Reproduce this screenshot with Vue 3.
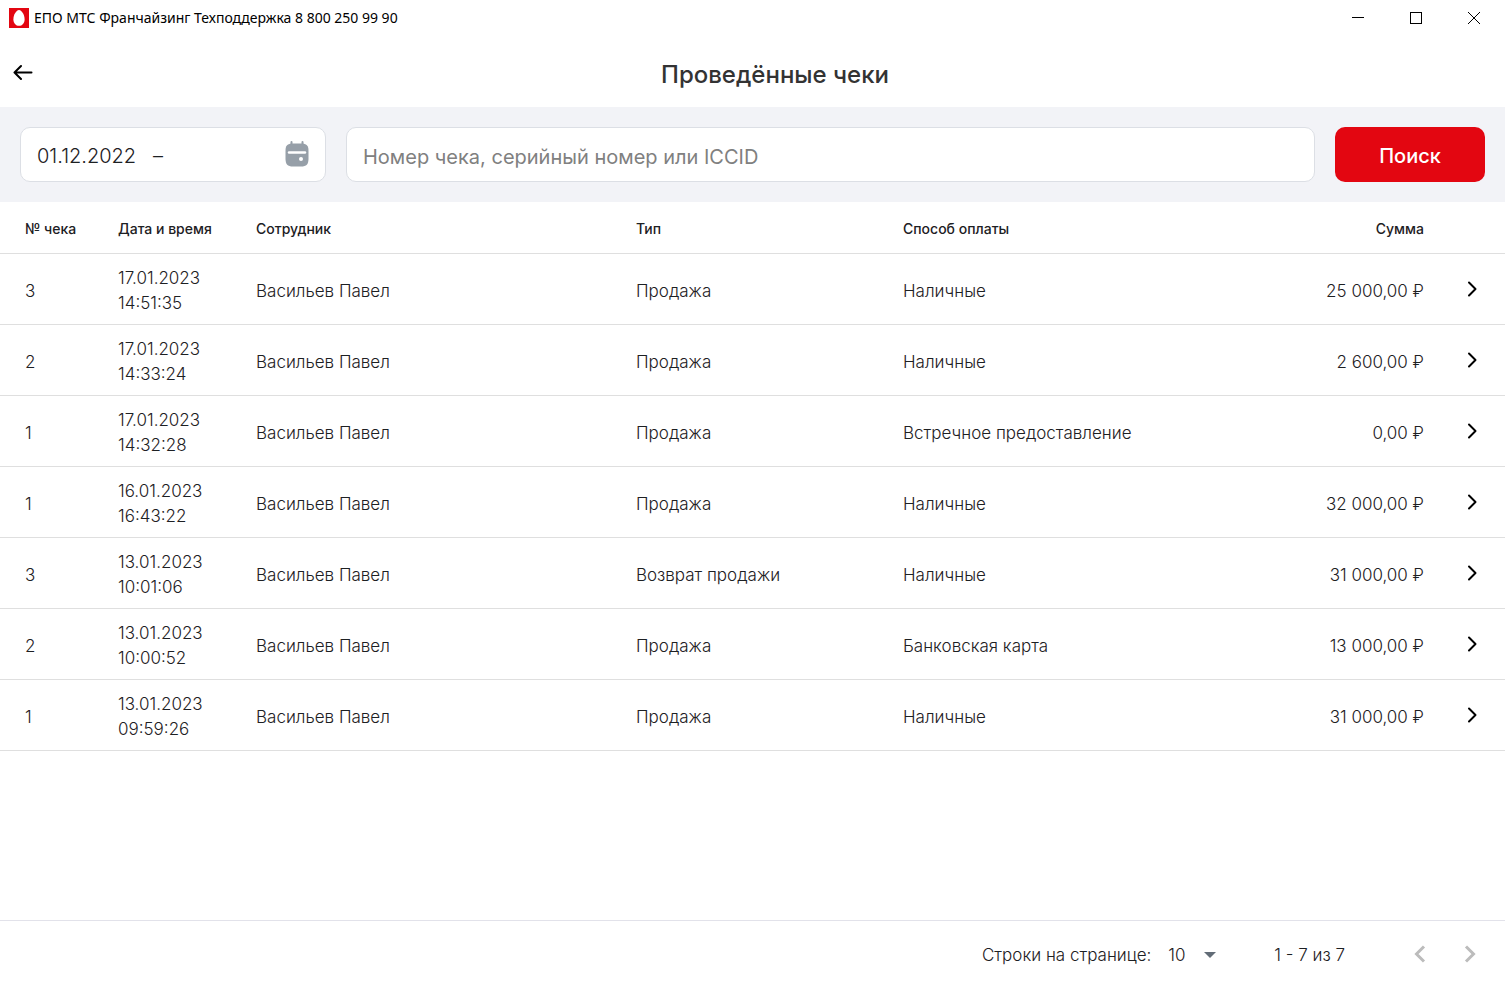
<script setup>
import { ref } from 'vue'

const period = ref('01.12.2022\u00a0\u00a0\u00a0–')
const query = ref('')
const pageSize = ref(10)

const receipts = [
  { number: 3, date: '17.01.2023', time: '14:51:35', employee: 'Васильев Павел', type: 'Продажа', payment: 'Наличные', total: '25 000,00 ₽' },
  { number: 2, date: '17.01.2023', time: '14:33:24', employee: 'Васильев Павел', type: 'Продажа', payment: 'Наличные', total: '2 600,00 ₽' },
  { number: 1, date: '17.01.2023', time: '14:32:28', employee: 'Васильев Павел', type: 'Продажа', payment: 'Встречное предоставление', total: '0,00 ₽' },
  { number: 1, date: '16.01.2023', time: '16:43:22', employee: 'Васильев Павел', type: 'Продажа', payment: 'Наличные', total: '32 000,00 ₽' },
  { number: 3, date: '13.01.2023', time: '10:01:06', employee: 'Васильев Павел', type: 'Возврат продажи', payment: 'Наличные', total: '31 000,00 ₽' },
  { number: 2, date: '13.01.2023', time: '10:00:52', employee: 'Васильев Павел', type: 'Продажа', payment: 'Банковская карта', total: '13 000,00 ₽' },
  { number: 1, date: '13.01.2023', time: '09:59:26', employee: 'Васильев Павел', type: 'Продажа', payment: 'Наличные', total: '31 000,00 ₽' },
]
</script>

<template>
  <div class="window">
    <div class="titlebar">
      <svg class="logo" width="20" height="20" viewBox="0 0 20 20" aria-hidden="true">
        <rect width="20" height="20" fill="#e30611" />
        <path d="M10 2C13 2 15.600 7.300 15.600 11.200C15.600 15.200 13.200 17.800 10 17.800C6.800 17.800 4.400 15.200 4.400 11.200C4.400 7.300 7 2 10 2Z" fill="#fff" />
      </svg>
      <span class="app-name">ЕПО МТС Франчайзинг Техподдержка 8 800 250 99 90</span>
      <div class="window-controls">
        <button type="button" aria-label="Свернуть">
          <svg width="12" height="12" viewBox="0 0 12 12"><path d="M0 5.500H12" stroke="#000" /></svg>
        </button>
        <button type="button" aria-label="Развернуть">
          <svg width="12" height="12" viewBox="0 0 12 12"><rect x=".5" y=".5" width="11" height="11" fill="none" stroke="#000" /></svg>
        </button>
        <button type="button" aria-label="Закрыть">
          <svg width="12" height="12" viewBox="0 0 12 12"><path d="M0 0L12 12M12 0L0 12" stroke="#000" /></svg>
        </button>
      </div>
    </div>

    <header class="header">
      <button class="back" type="button" aria-label="Назад">
        <svg width="20" height="16" viewBox="0 0 20 16" fill="none" stroke="#000" stroke-width="2" stroke-linecap="round" stroke-linejoin="round"><path d="M18.500 8.500H1.500M8 2L1.500 8.500L8 15" /></svg>
      </button>
      <h1>Проведённые чеки</h1>
    </header>

    <form class="filters" @submit.prevent>
      <label class="field period">
        <input v-model="period" type="text" aria-label="Период">
        <svg width="24" height="26" viewBox="0 0 24 26" aria-hidden="true">
          <path d="M6.500 1V4M17.500 1V4" stroke="#969fa8" stroke-width="2" stroke-linecap="round" />
          <path d="M8 2.500H16C21.800 2.500 23.500 4.500 23.500 10V17.500C23.500 23.500 21.500 25.500 16 25.500H8C2.500 25.500 .5 23.500 .5 17.500V10C.5 4.500 2.200 2.500 8 2.500Z" fill="#969fa8" />
          <path d="M4 11.500H20" stroke="#fff" stroke-width="2.400" stroke-linecap="round" />
          <circle cx="16" cy="18" r="2" fill="#fff" />
        </svg>
      </label>
      <label class="field search">
        <input v-model="query" type="text" aria-label="Поиск чека" placeholder="Номер чека, серийный номер или ICCID">
      </label>
      <button class="submit" type="submit">Поиск</button>
    </form>

    <main class="content">
      <table>
        <colgroup>
          <col class="c-number"><col class="c-date"><col class="c-employee"><col class="c-type"><col><col class="c-total"><col class="c-open">
        </colgroup>
        <thead>
          <tr>
            <th>№ чека</th>
            <th>Дата и время</th>
            <th>Сотрудник</th>
            <th>Тип</th>
            <th>Способ оплаты</th>
            <th class="total">Сумма</th>
            <th class="open"></th>
          </tr>
        </thead>
        <tbody>
          <tr v-for="r in receipts" :key="r.date + r.time">
            <td>{{ r.number }}</td>
            <td>{{ r.date }}<br>{{ r.time }}</td>
            <td>{{ r.employee }}</td>
            <td>{{ r.type }}</td>
            <td>{{ r.payment }}</td>
            <td class="total">{{ r.total }}</td>
            <td class="open">
              <button type="button" aria-label="Открыть чек">
                <svg width="10" height="16" viewBox="0 0 10 16" fill="none" stroke="#000" stroke-width="2" stroke-linecap="round" stroke-linejoin="round"><path d="M2 1.500L8.500 8L2 14.500" /></svg>
              </button>
            </td>
          </tr>
        </tbody>
      </table>
    </main>

    <footer class="pager">
      <label for="page-size">Строки на странице:</label>
      <div class="select">
        <select id="page-size" v-model="pageSize">
          <option :value="10">10</option>
          <option :value="20">20</option>
          <option :value="50">50</option>
        </select>
        <svg width="12" height="6" viewBox="0 0 12 6" aria-hidden="true"><path d="M0 0H12L6 6Z" fill="#626c77" /></svg>
      </div>
      <span class="range">1 - 7 из 7</span>
      <div class="arrows">
        <button type="button" aria-label="Предыдущая страница">
          <svg width="12" height="18" viewBox="0 0 12 18" fill="none" stroke="#bcbcbc" stroke-width="3"><path d="M10 1.500L2.500 9L10 16.500" /></svg>
        </button>
        <button type="button" aria-label="Следующая страница">
          <svg width="12" height="18" viewBox="0 0 12 18" fill="none" stroke="#bcbcbc" stroke-width="3"><path d="M2 1.500L9.500 9L2 16.500" /></svg>
        </button>
      </div>
    </footer>
  </div>
</template>

<style>
body {
  margin: 0;
  background: #fff;
}
</style>

<style scoped>
.window {
  display: flex;
  flex-direction: column;
  min-height: 100vh;
  color: #1d2023;
  font: 300 17px/25px Inter, Roboto, sans-serif;
}

.window * {
  box-sizing: border-box;
}

button {
  display: flex;
  align-items: center;
  justify-content: center;
  padding: 0;
  border: 0;
  background: none;
  font: inherit;
  cursor: pointer;
}

.titlebar {
  display: flex;
  align-items: center;
  height: 36px;
  padding-right: 2px;
  padding-left: 9px;
}

.app-name {
  margin-left: 5px;
  color: #000;
  font: 14px/20px "Noto Sans", sans-serif;
}

.window-controls {
  display: flex;
  margin-left: auto;
}

.window-controls button {
  width: 58px;
  height: 36px;
}

.header {
  display: grid;
  grid-template-columns: 45px 1fr;
  align-items: center;
  height: 71px;
}

.back {
  height: 40px;
}

h1 {
  margin: 0;
  padding-top: 6px;
  color: #333;
  font-size: 24px;
  font-weight: 500;
  line-height: 32px;
  text-align: center;
}

.filters {
  display: flex;
  gap: 20px;
  padding: 20px;
  background: #f2f3f7;
}

.field {
  display: flex;
  align-items: center;
  height: 55px;
  padding: 0 16px 2px;
  border: 1px solid #dcdfe5;
  border-radius: 10px;
  background: #fff;
}

.period {
  width: 306px;
}

.search {
  flex: 1;
}

.field input {
  flex: 1;
  min-width: 0;
  padding: 4px 0 0;
  border: 0;
  outline: 0;
  background: none;
  color: #1d2023;
  font: 300 20px/28px Inter, Roboto, sans-serif;
}

.search input {
  padding-top: 6px;
  font-weight: 400;
}

.field input::placeholder {
  color: #808080;
  opacity: 1;
}

.submit {
  width: 150px;
  height: 55px;
  padding-top: 4px;
  border-radius: 10px;
  background: #e30611;
  color: #fff;
  font-size: 20px;
  font-weight: 500;
}

.content {
  flex: 1;
}

table {
  width: 100%;
  table-layout: fixed;
  border-collapse: separate;
  border-spacing: 0;
}

.c-number {
  width: 93px;
}

.c-date {
  width: 138px;
}

.c-employee {
  width: 380px;
}

.c-type {
  width: 267px;
}

.c-total {
  width: 200px;
}

.c-open {
  width: 56px;
}

th,
td {
  padding: 12px 0 8px 25px;
  border-bottom: 1px solid #dfdfdf;
  text-align: left;
}

th {
  padding: 17px 0 14px 25px;
  font-size: 14px;
  font-weight: 500;
  line-height: 20px;
}

.total {
  padding-right: 25px;
  padding-left: 0;
  text-align: right;
}

.open {
  padding: 10px 0;
}

.open button {
  width: 46px;
  height: 40px;
}

.pager {
  display: flex;
  align-items: center;
  justify-content: flex-end;
  height: 64px;
  padding: 4px 10px 0 0;
  border-top: 1px solid #e2e2ea;
}

.pager label,
.pager select,
.range {
  padding: 2px 0 0;
}

.select {
  display: grid;
  align-items: center;
  width: 48px;
  margin-left: 17px;
}

.select select {
  grid-area: 1 / 1;
  border: 0;
  appearance: none;
  background: none;
  color: inherit;
  font: inherit;
}

.select svg {
  grid-area: 1 / 1;
  justify-self: end;
  pointer-events: none;
}

.range {
  margin-left: 58px;
}

.arrows {
  display: flex;
  margin-left: 50px;
}

.arrows button {
  width: 50px;
  height: 38px;
  padding-bottom: 2px;
}
</style>
